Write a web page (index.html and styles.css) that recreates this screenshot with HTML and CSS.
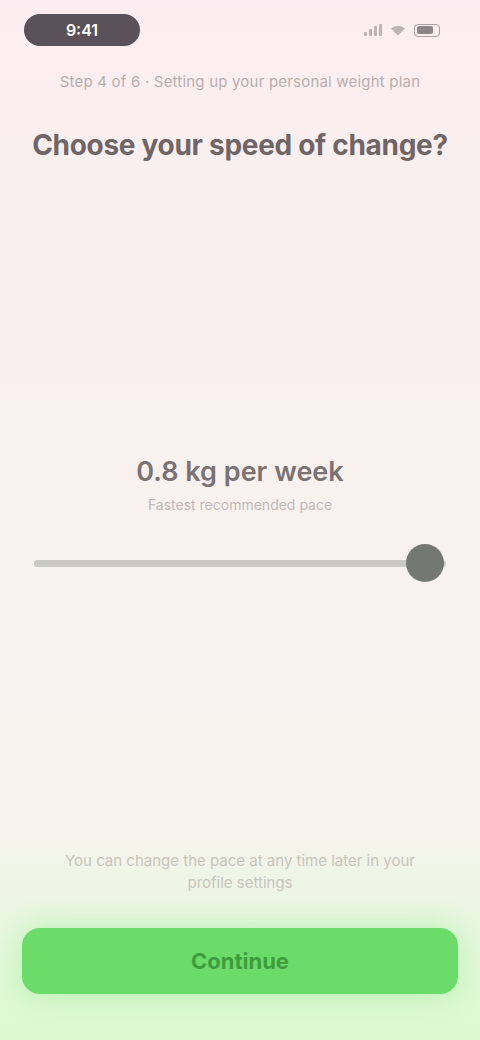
FILE: index.html
```html
<!DOCTYPE html>
<html lang="en">
<head>
<meta charset="utf-8">
<title>Speed of change</title>
<link rel="stylesheet" href="styles.css">
</head>
<body>
<div class="screen">
  <div class="status">
    <div class="time-pill">9:41</div>
    <div class="status-icons">
      <svg width="18" height="12" viewBox="0 0 18 12"><rect x="0" y="8" width="3" height="4" rx="1" fill="#bdb3b5"/><rect x="5" y="5" width="3" height="7" rx="1" fill="#bdb3b5"/><rect x="10" y="2" width="3" height="10" rx="1" fill="#bdb3b5"/><rect x="15" y="0" width="3" height="12" rx="1" fill="#bdb3b5"/></svg>
      <svg width="16" height="12" viewBox="0 0 16 12"><path d="M8 11.5 L1 4.5 A10 10 0 0 1 15 4.5 Z" fill="#bdb3b5"/></svg>
      <div class="battery"><div class="battery-fill"></div></div>
    </div>
  </div>
  <p class="step">Step 4 of 6 · Setting up your personal weight plan</p>
  <h1 class="title">Choose your speed of change?</h1>

  <div class="middle">
    <div class="value">0.8 kg per week</div>
    <div class="value-sub">Fastest recommended pace</div>
    <div class="slider">
      <div class="track"></div>
      <div class="thumb"></div>
    </div>
  </div>

  <div class="bottom">
    <p class="note">You can change the pace at any time later in your profile settings</p>
    <button class="cta">Continue</button>
  </div>
</div>
</body>
</html>
```
FILE: styles.css
```css
* { box-sizing: border-box; }
html, body { margin: 0; padding: 0; }
body {
  width: 480px;
  height: 1040px;
  font-family: Inter, "Noto Sans", sans-serif;
  background: linear-gradient(180deg, #fdedf2 0%, #f9efee 18%, #f8f2ee 60%, #f6f3ec 80%, #eaf7e2 88%, #dafad0 100%);
  overflow: hidden;
}
.screen {
  height: 1040px;
  display: flex;
  flex-direction: column;
}
.status {
  display: flex;
  justify-content: space-between;
  align-items: center;
  padding: 14px 40px 0 24px;
}
.time-pill {
  width: 116px;
  height: 32px;
  border-radius: 16px;
  background: #5b5158;
  color: #fff;
  font-size: 16px;
  font-weight: 600;
  display: flex;
  align-items: center;
  justify-content: center;
}
.status-icons {
  display: flex;
  align-items: center;
  gap: 8px;
}
.battery {
  width: 26px;
  height: 13px;
  border-radius: 4px;
  border: 1.5px solid #aa9fa3;
  padding: 1.5px;
}
.battery-fill {
  width: 80%;
  height: 100%;
  background: #8f8488;
  border-radius: 2px;
}
.step {
  margin: 26px 0 0;
  text-align: center;
  font-size: 15px;
  color: #b9aeae;
  letter-spacing: 0.2px;
}
.title {
  margin: 37px 0 0;
  text-align: center;
  font-size: 28px;
  font-weight: 700;
  color: #6f6566;
  letter-spacing: -0.3px;
}
.middle {
  margin-top: 293px;
  display: flex;
  flex-direction: column;
  align-items: center;
}
.value {
  font-size: 27px;
  font-weight: 600;
  color: #7a7273;
}
.value-sub {
  margin-top: 8px;
  font-size: 14px;
  color: #c2b8b8;
}
.slider {
  position: relative;
  width: 412px;
  height: 38px;
  margin-top: 31px;
}
.track {
  position: absolute;
  left: 0;
  right: 0;
  top: 16px;
  height: 7px;
  border-radius: 4px;
  background: #c9c8c1;
}
.thumb {
  position: absolute;
  right: 2px;
  top: 0;
  width: 38px;
  height: 38px;
  border-radius: 50%;
  background: #737971;
}
.bottom {
  margin-top: auto;
  padding: 0 22px 46px;
  display: flex;
  flex-direction: column;
  align-items: center;
}
.note {
  margin: 0 0 34px;
  width: 350px;
  text-align: center;
  font-size: 15px;
  line-height: 22px;
  color: #c8c4bd;
}
.cta {
  width: 436px;
  height: 66px;
  border: none;
  border-radius: 18px;
  background: #6bdc69;
  color: #3f9c3e;
  font-family: Inter, "Noto Sans", sans-serif;
  font-size: 22px;
  font-weight: 700;
  box-shadow: 0 0 30px rgba(120, 230, 110, 0.45);
}
```
